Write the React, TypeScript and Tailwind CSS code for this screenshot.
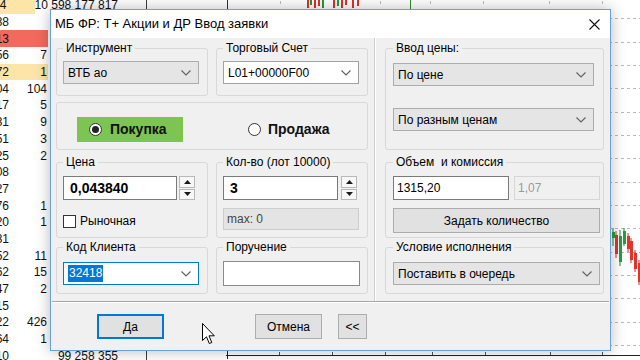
import React from 'react';
import { clsx } from 'clsx';

// background table rows (left edge of the terminal)
const colA = ['24', '38', '13', '56', '72', '04', '17', '31', '51', '25', '08', '27', '76', '20', '31', '52', '62', '47', '15', '22', '64', '10'];
const colB = ['', '', '', '7', '1', '104', '5', '9', '3', '2', '', '', '1', '1', '', '11', '15', '2', '', '426', '1', ''];
const colC: Record<number, string> = { 0: '10 598 177 817', 21: '99 258 355' };
const rowBg: Record<number, string> = { 0: 'bg-[#fce5a6]', 2: 'bg-[#f26a5d]', 4: 'bg-[#fce5a6]' };

const gridY = [18, 42, 65, 88, 112, 135, 158, 182, 205, 228, 252, 275, 298, 322, 345];

const candles = [
  { x: 612, hi: 228, lo: 246, o: 232, c: 238, up: true },
  { x: 615, hi: 231, lo: 258, o: 235, c: 254, up: false },
  { x: 619, hi: 230, lo: 266, o: 262, c: 236, up: true },
  { x: 623, hi: 228, lo: 246, o: 244, c: 231, up: true },
  { x: 627, hi: 233, lo: 252, o: 236, c: 249, up: false },
  { x: 630, hi: 238, lo: 263, o: 241, c: 260, up: false },
  { x: 634, hi: 250, lo: 272, o: 253, c: 269, up: false },
  { x: 638, hi: 260, lo: 285, o: 263, c: 282, up: false },
];

const topBars = [
  { x: 307, up: false, h: 8 },
  { x: 310, up: true, h: 5 },
  { x: 314, up: false, h: 8 },
  { x: 318, up: false, h: 6 },
  { x: 322, up: true, h: 8 },
  { x: 333, up: false, h: 8 },
  { x: 337, up: true, h: 6 },
  { x: 341, up: false, h: 8 },
  { x: 345, up: false, h: 5 },
  { x: 352, up: false, h: 8 },
  { x: 357, up: false, h: 6 },
];

function Table() {
  return (
    <div className="w-[147px] shrink-0 border-r border-[#3c3c3c] -mt-[3px] font-['Liberation_Sans',Arial,sans-serif] text-[12px] text-[#111]">
      {colA.map((a, i) => (
        <div key={i} className="flex h-[16.7px] items-center">
          <div className={clsx('w-[10px] h-full overflow-hidden flex justify-end items-center pr-[1px]', rowBg[i])}>
            <span className="whitespace-nowrap">{a}</span>
          </div>
          <div className={clsx('w-[38px] h-full flex justify-end items-center pr-[1px]', rowBg[i])}>{colB[i]}</div>
          <div className="flex-1 h-full flex justify-end items-center pr-[28px] whitespace-nowrap">{colC[i] ?? ''}</div>
        </div>
      ))}
    </div>
  );
}

function Chart() {
  return (
    <div className="flex-1 bg-white">
      <svg width="493" height="360" viewBox="147 0 493 360">
        {gridY.map((y) => (
          <line key={y} x1="147" x2="640" y1={y + 0.5} y2={y + 0.5} stroke="#b9b9b9" strokeDasharray="3 3" />
        ))}
        {/* strip above the dialog */}
        <line x1="227.5" x2="227.5" y1="0" y2="9" stroke="#333" />
        <line x1="410.5" x2="410.5" y1="0" y2="9" stroke="#2e8b3a" />
        {[280, 380, 430, 483, 549, 602].map((x) => (
          <line key={x} x1={x + 0.5} x2={x + 0.5} y1="1" y2="4" stroke="#bdbdbd" />
        ))}
        {topBars.map((b) => (
          <rect key={b.x} x={b.x} y={0} width="2" height={b.h} fill={b.up ? '#1f9a3a' : '#e0302a'} />
        ))}
        {/* candles right of the dialog */}
        {candles.map((c) => (
          <g key={c.x}>
            <line x1={c.x + 1} x2={c.x + 1} y1={c.hi} y2={c.lo} stroke={c.up ? '#1a8a32' : '#d8281f'} />
            <rect
              x={c.x}
              y={Math.min(c.o, c.c)}
              width="3"
              height={Math.abs(c.o - c.c)}
              fill={c.up ? '#22a03c' : '#e2342b'}
            />
          </g>
        ))}
        {/* bottom time axis */}
        <line x1="226" x2="640" y1="355.5" y2="355.5" stroke="#222" />
        <line x1="227.5" x2="227.5" y1="351" y2="359" stroke="#222" />
        {[279, 332, 385, 432, 485, 550, 602].map((x) => (
          <line key={x} x1={x + 0.5} x2={x + 0.5} y1="352" y2="355" stroke="#555" />
        ))}
      </svg>
    </div>
  );
}

const Chevron = () => (
  <svg width="10" height="6" viewBox="0 0 10 6" className="shrink-0">
    <path d="M0.5 0.5 L5 5 L9.5 0.5" fill="none" stroke="#606060" strokeWidth="1.1" />
  </svg>
);

function Combo({
  value,
  w,
  white,
  focused,
  className,
}: {
  value: string;
  w: string;
  white?: boolean;
  focused?: boolean;
  className?: string;
}) {
  return (
    <div
      className={clsx(
        'flex items-center justify-between h-[23px] pl-[4px] pr-[7px] border text-[12px] text-black',
        w,
        white ? 'bg-white' : 'bg-[#e5e5e5] border-[#adadad]',
        white && !focused && 'border-[#a2a2a2]',
        focused && 'border-[#0078d7]',
        className
      )}
    >
      {focused ? <span className="bg-[#0078d7] text-white px-[1px] leading-[17px]">{value}</span> : <span>{value}</span>}
      <Chevron />
    </div>
  );
}

function Spinner() {
  return (
    <div className="flex flex-col w-[16px] h-[24px] gap-[1px] shrink-0">
      <div className="flex-1 flex items-center justify-center bg-[#f7f7f7] border border-[#b8b8b8]">
        <svg width="7" height="4" viewBox="0 0 7 4">
          <path d="M0 4 L3.5 0 L7 4 Z" fill="#1a1a1a" />
        </svg>
      </div>
      <div className="flex-1 flex items-center justify-center bg-[#f7f7f7] border border-[#b8b8b8]">
        <svg width="7" height="4" viewBox="0 0 7 4">
          <path d="M0 0 L3.5 4 L7 0 Z" fill="#1a1a1a" />
        </svg>
      </div>
    </div>
  );
}

function GroupBox({ label, className, children }: { label: string; className: string; children?: React.ReactNode }) {
  return (
    <fieldset className={clsx('border border-[#d8d8d8] rounded-[3px] min-w-0', className)}>
      <legend className="px-[3px] text-[12px] leading-[16px] text-black whitespace-pre">{label}</legend>
      {children}
    </fieldset>
  );
}

const Radio = ({ on }: { on?: boolean }) => (
  <span className="w-[13px] h-[13px] rounded-full border border-[#333] bg-white flex items-center justify-center shrink-0">
    {on && <span className="w-[7px] h-[7px] rounded-full bg-[#222]" />}
  </span>
);

function Button({ children, w, primary, className }: { children: React.ReactNode; w: string; primary?: boolean; className?: string }) {
  return (
    <div
      className={clsx(
        'h-[25px] flex items-center justify-center bg-[#e1e1e1] text-[12px] text-black',
        primary ? 'border-2 border-[#0078d7]' : 'border border-[#adadad]',
        w,
        className
      )}
    >
      {children}
    </div>
  );
}

function OrderDialog() {
  return (
    <div className="absolute left-[50px] top-[9px] w-[561px] h-[342px] border border-[#6c9fd6] bg-[#f0f0f0] shadow-[0_0_14px_rgba(0,0,0,0.28)] flex flex-col font-['Liberation_Sans',Arial,sans-serif]">
      {/* title bar */}
      <div className="h-[28px] shrink-0 bg-white flex items-center justify-between pl-[4px] pr-[10px]">
        <span className="text-[13px] text-black">МБ ФР: Т+ Акции и ДР Ввод заявки</span>
        <svg width="11" height="11" viewBox="0 0 11 11">
          <path d="M0.5 0.5 L10.5 10.5 M10.5 0.5 L0.5 10.5" stroke="#111" strokeWidth="1.1" />
        </svg>
      </div>

      {/* form */}
      <div className="flex h-[263px] px-[5px] pt-[2px]">
        <div className="w-[312px] flex flex-col">
          <div className="flex gap-[8px]">
            <GroupBox label="Инструмент" className="w-[152px] h-[56px] px-[6px]">
              <Combo value="ВТБ ао" w="w-[136px]" className="mt-[5px]" />
            </GroupBox>
            <GroupBox label="Торговый Счет" className="w-[152px] h-[56px] px-[6px]">
              <Combo value="L01+00000F00" w="w-[136px]" white className="mt-[5px]" />
            </GroupBox>
          </div>

          <div className="mt-[6px] h-[48px] border border-[#d8d8d8] rounded-[3px] flex items-start pt-[14px] pl-[20px]">
            <div className="w-[106px] h-[25px] bg-[#7dc452] flex items-center pl-[12px] gap-[8px]">
              <Radio on />
              <span className="text-[14px] font-bold text-[#111]">Покупка</span>
            </div>
            <div className="ml-[65px] h-[25px] flex items-center gap-[7px]">
              <Radio />
              <span className="text-[14px] font-bold text-[#111]">Продажа</span>
            </div>
          </div>

          <div className="mt-[4px] flex gap-[8px]">
            <GroupBox label="Цена" className="w-[152px] h-[84px] px-[6px]">
              <div className="mt-[6px] flex gap-[2px]">
                <div className="w-[114px] h-[24px] bg-white border border-[#7a7a7a] flex items-center pl-[6px] text-[14px] font-bold text-black">
                  0,043840
                </div>
                <Spinner />
              </div>
              <div className="mt-[10px] h-[22px] flex items-center gap-[4px]">
                <span className="w-[13px] h-[13px] bg-white border border-[#333]" />
                <span className="text-[12px] text-black">Рыночная</span>
              </div>
            </GroupBox>
            <GroupBox label="Кол-во (лот 10000)" className="w-[152px] h-[84px] px-[6px]">
              <div className="mt-[6px] flex gap-[3px]">
                <div className="w-[115px] h-[24px] bg-white border border-[#7a7a7a] flex items-center pl-[6px] text-[14px] font-bold text-black">
                  3
                </div>
                <Spinner />
              </div>
              <div className="mt-[8px] w-[136px] h-[22px] bg-[#e4e4e4] border border-[#cdcdcd] flex items-center pl-[3px] text-[12px] text-[#444]">
                max: 0
              </div>
            </GroupBox>
          </div>

          <div className="mt-[1px] flex gap-[8px]">
            <GroupBox label="Код Клиента" className="w-[152px] h-[55px] px-[6px]">
              <Combo value="32418" w="w-[136px]" white focused className="mt-[7px]" />
            </GroupBox>
            <GroupBox label="Поручение" className="w-[152px] h-[55px] px-[6px]">
              <div className="mt-[6px] w-[137px] h-[25px] bg-white border border-[#8a8a8a]" />
            </GroupBox>
          </div>
        </div>

        <div className="ml-[6px] -mt-[2px] w-[2px] self-stretch border-l border-[#cdcdcd] border-r border-r-white" />

        <div className="ml-[9px] w-[219px] flex flex-col">
          <GroupBox label="Ввод цены:" className="h-[110px] pl-[7px] pr-[3px]">
            <Combo value="По цене" w="w-[201px]" className="mt-[7px]" />
            <Combo value="По разным ценам" w="w-[201px]" className="mt-[22px]" />
          </GroupBox>
          <GroupBox label="Объем  и комиссия" className="mt-[4px] h-[84px] pl-[7px] pr-[3px]">
            <div className="mt-[6px] flex gap-[5px]">
              <div className="w-[116px] h-[24px] bg-white border border-[#7a7a7a] flex items-center pl-[3px] text-[12px] text-black">
                1315,20
              </div>
              <div className="w-[86px] h-[24px] bg-[#f0f0f0] border border-[#d6d6d6] flex items-center pl-[3px] text-[12px] text-[#9a9a9a]">
                1,07
              </div>
            </div>
            <Button w="w-[207px]" className="mt-[8px] h-[22px]">
              Задать количество
            </Button>
          </GroupBox>
          <GroupBox label="Условие исполнения" className="mt-[1px] h-[55px] pl-[7px] pr-[3px]">
            <Combo value="Поставить в очередь" w="w-[207px]" className="mt-[7px]" />
          </GroupBox>
        </div>
      </div>

      {/* separator */}
      <div className="mx-[1px] h-[2px] border-t border-[#a6a6a6] border-b border-b-white" />

      {/* buttons */}
      <div className="flex pt-[11px] pl-[46px]">
        <Button w="w-[67px]" primary>
          Да
        </Button>
        <Button w="w-[67px]" className="ml-[91px]">
          Отмена
        </Button>
        <Button w="w-[29px]" className="ml-[16px]">
          &lt;&lt;
        </Button>
      </div>
    </div>
  );
}

export default function App() {
  return (
    <div className="relative w-[640px] h-[360px] overflow-hidden bg-white">
      <div className="flex h-full">
        <Table />
        <Chart />
      </div>
      <OrderDialog />
      <svg className="absolute left-[202px] top-[323px]" width="14" height="22" viewBox="0 0 14 22">
        <path d="M0.5 0.5 L0.5 17.5 L4.5 13.8 L7.3 20.5 L9.8 19.5 L7 12.8 L12.3 12.8 Z" fill="white" stroke="black" strokeWidth="1" />
      </svg>
    </div>
  );
}
